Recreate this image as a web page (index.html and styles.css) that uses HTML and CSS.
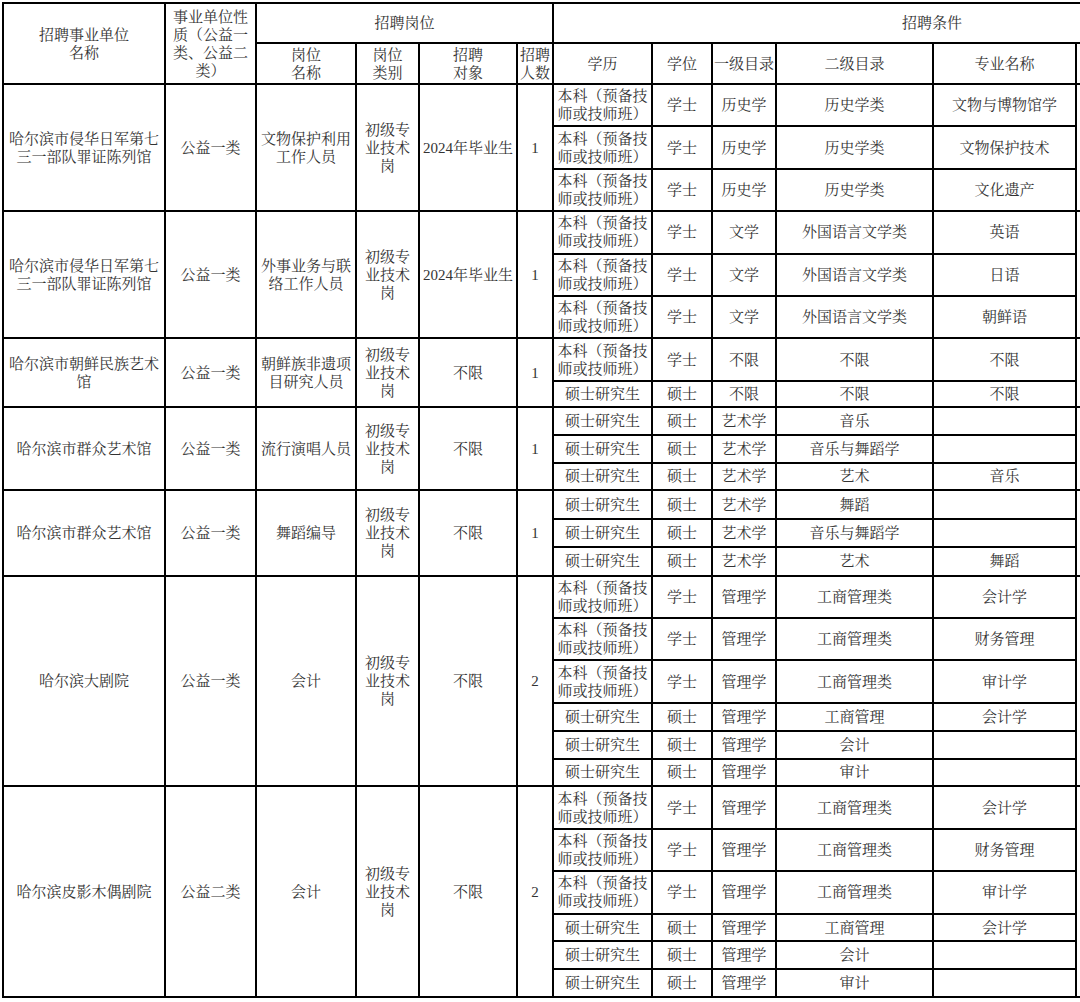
FILE: index.html
```html
<!DOCTYPE html>
<html lang="zh-CN">
<head>
<meta charset="utf-8">
<title>招聘岗位表</title>
<link rel="stylesheet" href="styles.css">
</head>
<body>
<div class="frame">
<table class="jobs">
  <colgroup>
    <col class="c-unit"><col class="c-nature"><col class="c-post"><col class="c-type"><col class="c-target"><col class="c-num">
    <col class="c-edu"><col class="c-deg"><col class="c-cat1"><col class="c-cat2"><col class="c-major"><col class="c-extra">
  </colgroup>
  <thead>
    <tr class="hd1">
      <th rowspan="2">招聘事业单位<br>名称</th>
      <th rowspan="2">事业单位性质（公益一类、公益二类）</th>
      <th colspan="4">招聘岗位</th>
      <th colspan="6">招聘条件</th>
    </tr>
    <tr class="hd2">
      <th>岗位<br>名称</th>
      <th>岗位<br>类别</th>
      <th>招聘<br>对象</th>
      <th>招聘<br>人数</th>
      <th>学历</th>
      <th>学位</th>
      <th>一级目录</th>
      <th>二级目录</th>
      <th>专业名称</th>
      <th></th>
    </tr>
  </thead>
  <tbody>
    <!-- group 1 -->
    <tr class="h2">
      <td rowspan="3" class="unit">哈尔滨市侵华日军第七三一部队罪证陈列馆</td>
      <td rowspan="3">公益一类</td>
      <td rowspan="3">文物保护利用工作人员</td>
      <td rowspan="3">初级专业技术岗</td>
      <td rowspan="3">2024年毕业生</td>
      <td rowspan="3">1</td>
      <td class="edu">本科（预备技师或技师班）</td><td>学士</td><td>历史学</td><td>历史学类</td><td>文物与博物馆学</td>
      <td rowspan="3"></td>
    </tr>
    <tr class="h2"><td class="edu">本科（预备技师或技师班）</td><td>学士</td><td>历史学</td><td>历史学类</td><td>文物保护技术</td></tr>
    <tr class="h2"><td class="edu">本科（预备技师或技师班）</td><td>学士</td><td>历史学</td><td>历史学类</td><td>文化遗产</td></tr>

    <!-- group 2 -->
    <tr class="h2">
      <td rowspan="3" class="unit">哈尔滨市侵华日军第七三一部队罪证陈列馆</td>
      <td rowspan="3">公益一类</td>
      <td rowspan="3">外事业务与联络工作人员</td>
      <td rowspan="3">初级专业技术岗</td>
      <td rowspan="3">2024年毕业生</td>
      <td rowspan="3">1</td>
      <td class="edu">本科（预备技师或技师班）</td><td>学士</td><td>文学</td><td>外国语言文学类</td><td>英语</td>
      <td rowspan="3"></td>
    </tr>
    <tr class="h2"><td class="edu">本科（预备技师或技师班）</td><td>学士</td><td>文学</td><td>外国语言文学类</td><td>日语</td></tr>
    <tr class="h2"><td class="edu">本科（预备技师或技师班）</td><td>学士</td><td>文学</td><td>外国语言文学类</td><td>朝鲜语</td></tr>

    <!-- group 3 -->
    <tr class="h2">
      <td rowspan="2" class="unit">哈尔滨市朝鲜民族艺术馆</td>
      <td rowspan="2">公益一类</td>
      <td rowspan="2">朝鲜族非遗项目研究人员</td>
      <td rowspan="2">初级专业技术岗</td>
      <td rowspan="2">不限</td>
      <td rowspan="2">1</td>
      <td class="edu">本科（预备技师或技师班）</td><td>学士</td><td>不限</td><td>不限</td><td>不限</td>
      <td rowspan="2"></td>
    </tr>
    <tr class="h1s"><td>硕士研究生</td><td>硕士</td><td>不限</td><td>不限</td><td>不限</td></tr>

    <!-- group 4 -->
    <tr class="h1">
      <td rowspan="3" class="unit">哈尔滨市群众艺术馆</td>
      <td rowspan="3">公益一类</td>
      <td rowspan="3">流行演唱人员</td>
      <td rowspan="3">初级专业技术岗</td>
      <td rowspan="3">不限</td>
      <td rowspan="3">1</td>
      <td>硕士研究生</td><td>硕士</td><td>艺术学</td><td>音乐</td><td></td>
      <td rowspan="3"></td>
    </tr>
    <tr class="h1"><td>硕士研究生</td><td>硕士</td><td>艺术学</td><td>音乐与舞蹈学</td><td></td></tr>
    <tr class="h1"><td>硕士研究生</td><td>硕士</td><td>艺术学</td><td>艺术</td><td>音乐</td></tr>

    <!-- group 5 -->
    <tr class="h1b">
      <td rowspan="3" class="unit">哈尔滨市群众艺术馆</td>
      <td rowspan="3">公益一类</td>
      <td rowspan="3">舞蹈编导</td>
      <td rowspan="3">初级专业技术岗</td>
      <td rowspan="3">不限</td>
      <td rowspan="3">1</td>
      <td>硕士研究生</td><td>硕士</td><td>艺术学</td><td>舞蹈</td><td></td>
      <td rowspan="3"></td>
    </tr>
    <tr class="h1b"><td>硕士研究生</td><td>硕士</td><td>艺术学</td><td>音乐与舞蹈学</td><td></td></tr>
    <tr class="h1b"><td>硕士研究生</td><td>硕士</td><td>艺术学</td><td>艺术</td><td>舞蹈</td></tr>

    <!-- group 6 -->
    <tr class="h2">
      <td rowspan="6" class="unit">哈尔滨大剧院</td>
      <td rowspan="6">公益一类</td>
      <td rowspan="6">会计</td>
      <td rowspan="6">初级专业技术岗</td>
      <td rowspan="6">不限</td>
      <td rowspan="6">2</td>
      <td class="edu">本科（预备技师或技师班）</td><td>学士</td><td>管理学</td><td>工商管理类</td><td>会计学</td>
      <td rowspan="6"></td>
    </tr>
    <tr class="h2"><td class="edu">本科（预备技师或技师班）</td><td>学士</td><td>管理学</td><td>工商管理类</td><td>财务管理</td></tr>
    <tr class="h2"><td class="edu">本科（预备技师或技师班）</td><td>学士</td><td>管理学</td><td>工商管理类</td><td>审计学</td></tr>
    <tr class="h1"><td>硕士研究生</td><td>硕士</td><td>管理学</td><td>工商管理</td><td>会计学</td></tr>
    <tr class="h1"><td>硕士研究生</td><td>硕士</td><td>管理学</td><td>会计</td><td></td></tr>
    <tr class="h1"><td>硕士研究生</td><td>硕士</td><td>管理学</td><td>审计</td><td></td></tr>

    <!-- group 7 -->
    <tr class="h2">
      <td rowspan="6" class="unit">哈尔滨皮影木偶剧院</td>
      <td rowspan="6">公益二类</td>
      <td rowspan="6">会计</td>
      <td rowspan="6">初级专业技术岗</td>
      <td rowspan="6">不限</td>
      <td rowspan="6">2</td>
      <td class="edu">本科（预备技师或技师班）</td><td>学士</td><td>管理学</td><td>工商管理类</td><td>会计学</td>
      <td rowspan="6"></td>
    </tr>
    <tr class="h2"><td class="edu">本科（预备技师或技师班）</td><td>学士</td><td>管理学</td><td>工商管理类</td><td>财务管理</td></tr>
    <tr class="h2"><td class="edu">本科（预备技师或技师班）</td><td>学士</td><td>管理学</td><td>工商管理类</td><td>审计学</td></tr>
    <tr class="h1"><td>硕士研究生</td><td>硕士</td><td>管理学</td><td>工商管理</td><td>会计学</td></tr>
    <tr class="h1"><td>硕士研究生</td><td>硕士</td><td>管理学</td><td>会计</td><td></td></tr>
    <tr class="h1"><td>硕士研究生</td><td>硕士</td><td>管理学</td><td>审计</td><td></td></tr>
  </tbody>
</table>
</div>
</body>
</html>
```

FILE: styles.css
```css
html, body {
  margin: 0;
  padding: 0;
  background: #ffffff;
  overflow: hidden;
}

body {
  font-family: "Liberation Serif", "Noto Serif CJK SC", "Noto Sans CJK SC", serif;
  font-size: 15px;
  line-height: 18px;
  color: #333333;
}

.frame {
  width: 1078px;
  height: 1000px;
  padding: 2px 0 0 2px;
  overflow: hidden;
}

.jobs {
  border-collapse: collapse;
  table-layout: fixed;
  width: 1308px;
}

.jobs th,
.jobs td {
  border: 2px solid #000000;
  padding: 0 2px;
  text-align: center;
  vertical-align: middle;
  font-weight: normal;
  overflow: hidden;
}

.c-unit { width: 162px; }
.c-nature { width: 91px; }
.c-post { width: 100px; }
.c-type { width: 63px; }
.c-target { width: 98px; }
.c-num { width: 36px; }
.c-edu { width: 99px; }
.c-deg { width: 60px; }
.c-cat1 { width: 64px; }
.c-cat2 { width: 157px; }
.c-major { width: 143px; }
.c-extra { width: 235px; }

.jobs th { padding: 0 1px; }

.jobs td.unit { padding: 0 5px; }

.jobs td.edu { padding: 0 1px; }

.hd1 { height: 40px; }
.hd2 { height: 41px; }
.h2 { height: 42.4px; }
.h1 { height: 27.9px; }
.h1b { height: 28.4px; }
.h1s { height: 26px; }
```
